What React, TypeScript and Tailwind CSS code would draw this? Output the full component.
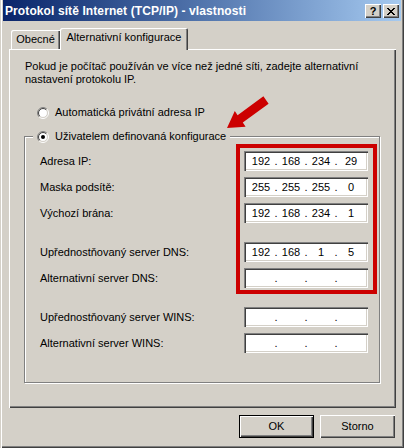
import React from "react";

// Windows classic "TCP/IP properties" dialog, alternative configuration tab.

const raised =
  "shadow-[inset_1px_1px_0_#fff,inset_-1px_-1px_0_#404040,inset_-2px_-2px_0_#808080]";
const sunken =
  "shadow-[inset_1px_1px_0_#808080,inset_2px_2px_0_#404040,inset_-1px_-1px_0_#fff,inset_-2px_-2px_0_#d4d0c8]";

type Row = { label: string; parts?: string[]; spaced?: boolean };

const rows: Row[] = [
  { label: "Adresa IP:", parts: ["192", "168", "234", "29"] },
  { label: "Maska podsítě:", parts: ["255", "255", "255", "0"] },
  { label: "Výchozí brána:", parts: ["192", "168", "234", "1"] },
  { label: "Upřednostňovaný server DNS:", parts: ["192", "168", "1", "5"], spaced: true },
  { label: "Alternativní server DNS:" },
  { label: "Upřednostňovaný server WINS:", spaced: true },
  { label: "Alternativní server WINS:" },
];

function Radio({ checked }: { checked?: boolean }) {
  const arc = (r: number) => {
    const a = r * 0.7071;
    return {
      tl: `M ${6 - a} ${6 + a} A ${r} ${r} 0 0 1 ${6 + a} ${6 - a}`,
      br: `M ${6 + a} ${6 - a} A ${r} ${r} 0 0 1 ${6 - a} ${6 + a}`,
    };
  };
  const o = arc(5.5);
  const i = arc(4.5);
  return (
    <svg width="12" height="12" viewBox="0 0 12 12" className="shrink-0">
      <circle cx="6" cy="6" r="4.5" fill="#fff" />
      <path d={o.tl} stroke="#808080" fill="none" />
      <path d={o.br} stroke="#fff" fill="none" />
      <path d={i.tl} stroke="#404040" fill="none" />
      <path d={i.br} stroke="#d4d0c8" fill="none" />
      {checked && <circle cx="6" cy="6" r="2" fill="#000" />}
    </svg>
  );
}

function IpField({ parts }: { parts?: string[] }) {
  const p = parts ?? ["", "", "", ""];
  return (
    <div className={`flex h-[20px] w-[124px] items-center bg-white pl-[4px] ${sunken}`}>
      {p.map((v, i) => (
        <React.Fragment key={i}>
          <span className="w-[26px] text-center">{v}</span>
          {i < 3 && <span className="w-[4px] text-center">.</span>}
        </React.Fragment>
      ))}
    </div>
  );
}

export default function App() {
  return (
    <div className="relative h-[448px] w-[404px] overflow-hidden bg-[#d4d0c8] px-[3px] font-['Liberation_Sans',Arial,sans-serif] text-[11px] text-black shadow-[inset_1px_0_0_#d4d0c8,inset_2px_0_0_#fff,inset_-1px_-1px_0_#404040,inset_-2px_-2px_0_#808080]">
      {/* caption */}
      <div className="flex h-[21px] items-center justify-between bg-linear-to-r from-[#0a246a] to-[#a6caf0] pl-[2px] pr-[2px] pt-[1px]">
        <span className="text-[12px] font-bold tracking-[0.1px] text-white">
          Protokol sítě Internet (TCP/IP) - vlastnosti
        </span>
        <div className="flex gap-[2px]">
          <div className={`flex h-[14px] w-[16px] items-center justify-center bg-[#d4d0c8] text-[11px] font-bold leading-none ${raised}`}>
            ?
          </div>
          <div className={`flex h-[14px] w-[16px] items-center justify-center bg-[#d4d0c8] ${raised}`}>
            <svg width="8" height="7" viewBox="0 0 8 7" shapeRendering="crispEdges">
              <path
                d="M0 0h2v1h1v1h2v-1h1v-1h2v1h-1v1h-1v1h-1v1h1v1h1v1h1v1h-2v-1h-1v-1h-2v1h-1v1h-2v-1h1v-1h1v-1h1v-1h-1v-1h-1v-1h-1z"
                fill="#000"
              />
            </svg>
          </div>
        </div>
      </div>

      {/* tabs + panel */}
      <div className="ml-[6px] mr-[5px] mt-[7px]">
        <div className="flex h-[21px] items-end pl-[2px]">
          <div className="flex h-[19px] w-[49px] items-center justify-center rounded-tl-[2px] pb-[1px] shadow-[inset_1px_1px_0_#fff,inset_-1px_0_0_#404040,inset_-2px_0_0_#808080]">
            Obecné
          </div>
          <div className="relative z-10 -mb-[1px] flex h-[22px] w-[128px] items-center justify-center rounded-tl-[2px] rounded-tr-[2px] bg-[#d4d0c8] pb-[3px] shadow-[inset_1px_1px_0_#fff,inset_-1px_0_0_#404040,inset_-2px_0_0_#808080]">
            Alternativní konfigurace
          </div>
        </div>
        <div className={`h-[359px] pl-[15px] pt-[11px] ${raised}`}>
          <p className="pl-[1px] leading-[13px]">
            Pokud je počítač používán ve více než jedné síti, zadejte alternativní
            <br />
            nastavení protokolu IP.
          </p>
          <div className="ml-[13px] mt-[20px] flex h-[13px] items-center gap-[6px]">
            <Radio />
            <span>Automatická privátní adresa IP</span>
          </div>
          <div className="relative mt-[17px] h-[247px] w-[356px] border border-[#808080] pl-[15px] pt-[14px] shadow-[inset_1px_1px_0_#fff,1px_1px_0_#fff]">
            <div className="absolute left-[8px] top-[-7px] flex h-[13px] items-center gap-[6px] bg-[#d4d0c8] pl-[4px] pr-[4px]">
              <Radio checked />
              <span>Uživatelem definovaná konfigurace</span>
            </div>
            {rows.map((r) => (
              <div
                key={r.label}
                className={`grid h-[20px] grid-cols-[204px_124px] items-center ${
                  r.label === "Adresa IP:" ? "" : r.spaced ? "mt-[19px]" : "mt-[6px]"
                }`}
              >
                <span>{r.label}</span>
                <IpField parts={r.parts} />
              </div>
            ))}
          </div>
        </div>
      </div>

      {/* dialog buttons */}
      <div className="mr-[6px] mt-[7px] flex justify-end gap-[6px]">
        <button className={`h-[23px] w-[75px] border border-black bg-[#d4d0c8] ${raised}`}>OK</button>
        <button className={`h-[23px] w-[75px] bg-[#d4d0c8] ${raised}`}>Storno</button>
      </div>

      {/* red annotation */}
      <div className="pointer-events-none absolute left-[236px] top-[144px] h-[150px] w-[141px] border-4 border-[#cc0000]" />
      <svg
        className="pointer-events-none absolute left-0 top-0"
        width="404"
        height="448"
        viewBox="0 0 404 448"
      >
        <polygon
          points="263.4,96.3 268.6,103.7 242.8,122.6 245.6,126.7 227,128 234.8,111.1 237.6,115.2"
          fill="#cc0000"
        />
      </svg>
    </div>
  );
}
